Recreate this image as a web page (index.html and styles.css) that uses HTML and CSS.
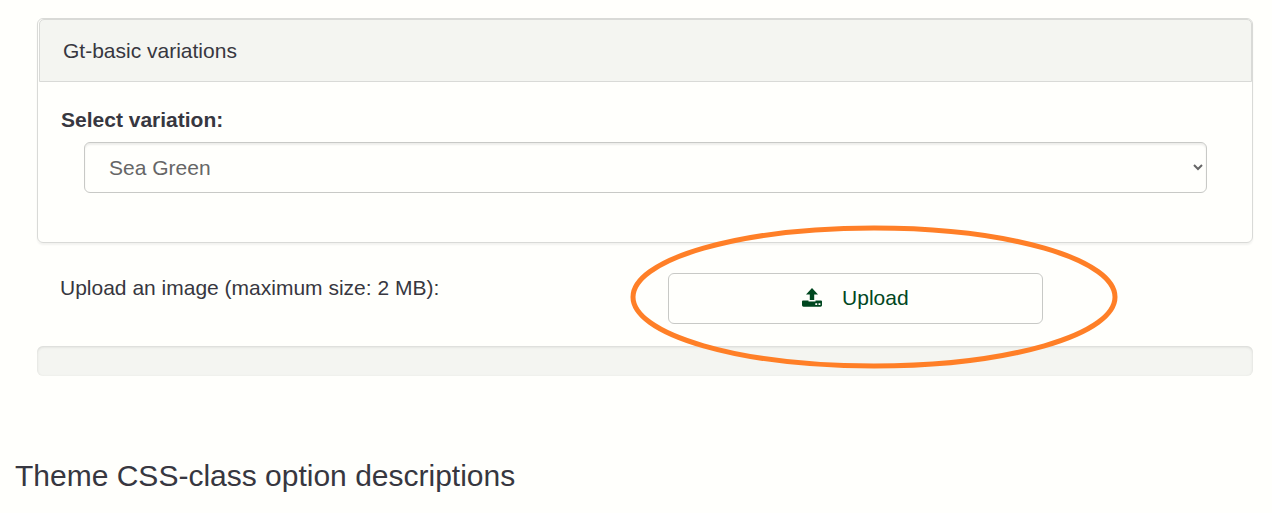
FILE: index.html
```html
<!DOCTYPE html>
<html lang="en">
<head>
<meta charset="utf-8">
<title>Theme options</title>
<link rel="stylesheet" href="styles.css">
</head>
<body>
<main class="page">
  <section class="panel">
    <div class="panel-heading">Gt-basic variations</div>
    <div class="panel-body">
      <label class="field-label" for="variation">Select variation:</label>
      <select class="field-select" id="variation">
        <option>Sea Green</option>
      </select>
    </div>
  </section>

  <div class="upload-row">
    <div class="upload-cell" id="upload-label">Upload an image (maximum size: 2 MB):</div>
    <div class="upload-cell">
      <div class="upload-action">
        <button class="upload-button" type="button" aria-describedby="upload-label">
          <svg class="upload-icon" viewBox="0 0 20 20" aria-hidden="true">
            <path d="M10 0 L16 6.500 H12.200 V12 H7.800 V6.500 H4 Z"/>
            <path fill-rule="evenodd" d="M1 12.500 H6.500 V13.500 H13.500 V12.500 H19 Q20 12.500 20 13.500 V17.300 Q20 18.700 18.500 18.700 H1.500 Q0 18.700 0 17.300 V13.500 Q0 12.500 1 12.500 Z M13.300 15.200 V17 H15.200 V15.200 Z M16.500 15.200 V17 H18.400 V15.200 Z"/>
          </svg>
          Upload
        </button>
        <svg class="highlight" viewBox="0 0 488 144" aria-hidden="true">
          <ellipse cx="244" cy="72" rx="241" ry="69"/>
        </svg>
      </div>
    </div>
  </div>

  <div class="progress" role="progressbar" aria-label="Upload progress" aria-valuenow="0"></div>
</main>
<h2 class="section-title">Theme CSS-class option descriptions</h2>
</body>
</html>
```
FILE: styles.css
```css
* {
  box-sizing: border-box;
}

body {
  margin: 0;
  padding: 18px 19px 16px 15px;
  background: #fffffc;
  color: #373740;
  font-family: "Liberation Sans", Arial, sans-serif;
  font-size: 21px;
  line-height: 30px;
}

.page {
  margin-left: 22px;
}

.panel {
  border: 1px solid #d9dad7;
  border-radius: 6px;
  box-shadow: 0 2px 2px rgba(0, 0, 0, 0.05);
}

.panel-heading {
  margin-left: 1px;
  padding: 16px 23px 15px;
  border: 1px solid #d9dad7;
  border-radius: 5px 5px 0 0;
  background: #f4f5f1;
}

.panel-body {
  display: flex;
  flex-direction: column;
  gap: 7px;
  padding: 23px 23px 49px;
}

.field-label {
  font-weight: bold;
}

.field-select {
  height: 51px;
  margin: 0 22px 0 23px;
  padding: 0 0 0 20px;
  border: 1px solid #c8c9c6;
  border-radius: 6px;
  background-color: #fffffc;
  box-shadow: inset 0 2px 2px rgba(0, 0, 0, 0.07);
  color: #666;
  font: inherit;
}

.upload-row {
  display: grid;
  grid-template-columns: 1fr 1fr;
  margin-top: 30px;
}

.upload-cell {
  padding: 0 23px;
}

.upload-action {
  position: relative;
  width: 66.667%;
}

.upload-button {
  display: flex;
  align-items: center;
  justify-content: center;
  gap: 20px;
  width: 100%;
  height: 51px;
  padding: 0 0 2px;
  border: 1px solid #c8c9c6;
  border-radius: 6px;
  background: #fffffc;
  color: #00471f;
  font: inherit;
}

.upload-icon {
  width: 20px;
  height: 20px;
  fill: currentColor;
}

.highlight {
  position: absolute;
  top: -48px;
  left: -38px;
  width: 488px;
  height: 144px;
  fill: none;
  stroke: #ff7f27;
  stroke-width: 5px;
  pointer-events: none;
}

.progress {
  height: 30px;
  margin-top: 22px;
  border-radius: 6px;
  background: #f4f5f1;
  box-shadow: inset 0 1px 3px rgba(0, 0, 0, 0.13);
}

.section-title {
  margin: 82px 0 0;
  font-size: 30px;
  font-weight: normal;
  line-height: 36px;
}
```
